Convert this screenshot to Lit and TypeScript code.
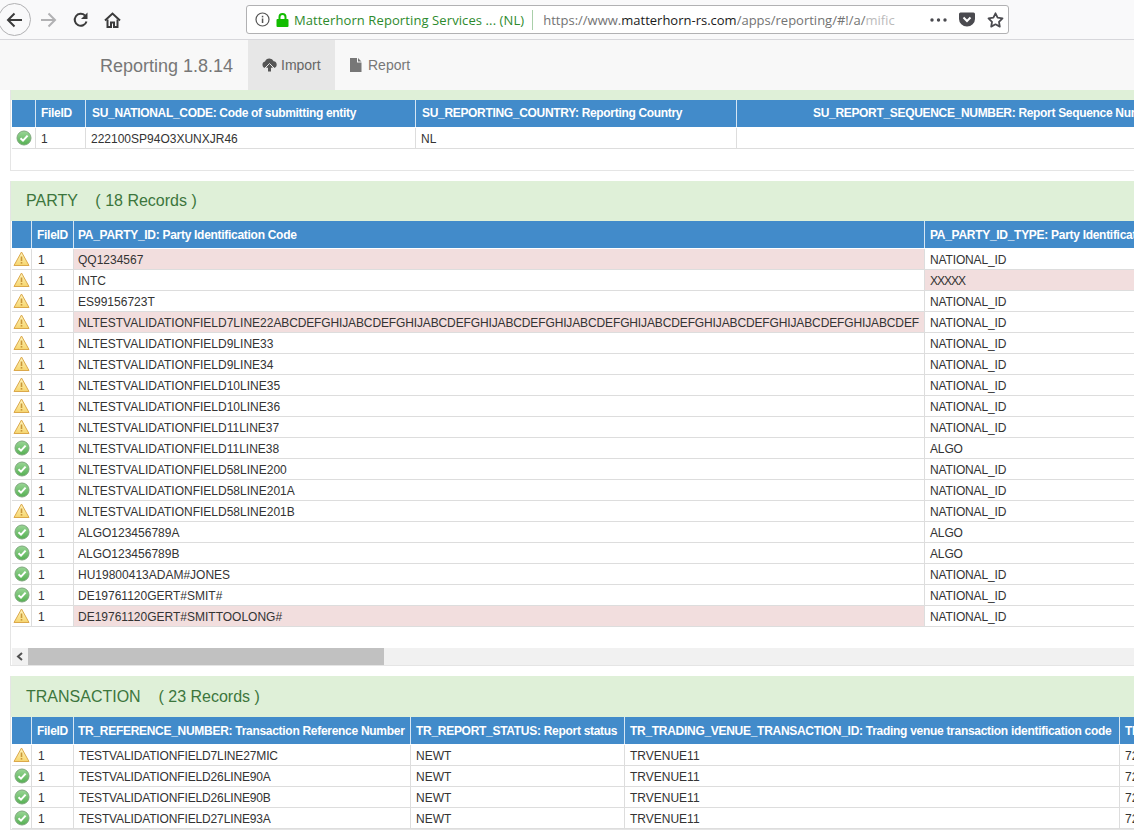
import { LitElement, html, css } from "lit";
import { customElement } from "lit/decorators.js";

const okIcon = html`<svg class="ic" width="16" height="16" viewBox="0 0 16 16"><defs><linearGradient id="g" x1="0" y1="0" x2="0" y2="1"><stop offset="0" stop-color="#9ad696"/><stop offset="1" stop-color="#55b052"/></linearGradient></defs><circle cx="8" cy="8" r="7" fill="url(#g)" stroke="#7fa87e" stroke-width="1"/><path d="M4.500 8.200 7 10.600 11.600 5.600" fill="none" stroke="#fff" stroke-width="2"/></svg>`;
const warnIcon = html`<svg class="ic" width="17" height="16" viewBox="0 0 17 16"><defs><linearGradient id="w" x1="0" y1="0" x2="0" y2="1"><stop offset="0" stop-color="#fff6c0"/><stop offset="1" stop-color="#f6d56e"/></linearGradient></defs><path d="M8.500 1 16 14.500H1Z" fill="url(#w)" stroke="#dba84a" stroke-width="1" stroke-linejoin="round"/><path d="M8.500 5.500V10" stroke="#c9973a" stroke-width="1.600"/><rect x="7.700" y="11" width="1.600" height="1.600" fill="#c9973a"/></svg>`;

const ABC = "ABCDEFGHIJ";
const longTail = html`NLTESTVALIDATIONFIELD7LINE22<span class="tail">${ABC.repeat(8) + "ABCDEF"}</span>`;
const partyRows: [number, unknown, string, number][] = [
  [0, "QQ1234567", "NATIONAL_ID", 1],
  [0, "INTC", "XXXXX", 2],
  [0, "ES99156723T", "NATIONAL_ID", 0],
  [0, longTail, "NATIONAL_ID", 1],
  [0, "NLTESTVALIDATIONFIELD9LINE33", "NATIONAL_ID", 0],
  [0, "NLTESTVALIDATIONFIELD9LINE34", "NATIONAL_ID", 0],
  [0, "NLTESTVALIDATIONFIELD10LINE35", "NATIONAL_ID", 0],
  [0, "NLTESTVALIDATIONFIELD10LINE36", "NATIONAL_ID", 0],
  [0, "NLTESTVALIDATIONFIELD11LINE37", "NATIONAL_ID", 0],
  [1, "NLTESTVALIDATIONFIELD11LINE38", "ALGO", 0],
  [1, "NLTESTVALIDATIONFIELD58LINE200", "NATIONAL_ID", 0],
  [1, "NLTESTVALIDATIONFIELD58LINE201A", "NATIONAL_ID", 0],
  [0, "NLTESTVALIDATIONFIELD58LINE201B", "NATIONAL_ID", 0],
  [1, "ALGO123456789A", "ALGO", 0],
  [1, "ALGO123456789B", "ALGO", 0],
  [1, "HU19800413ADAM#JONES", "NATIONAL_ID", 0],
  [1, "DE19761120GERT#SMIT#", "NATIONAL_ID", 0],
  [0, "DE19761120GERT#SMITTOOLONG#", "NATIONAL_ID", 1],
];

const txRows: [number, string][] = [
  [0, "TESTVALIDATIONFIELD7LINE27MIC"],
  [1, "TESTVALIDATIONFIELD26LINE90A"],
  [1, "TESTVALIDATIONFIELD26LINE90B"],
  [1, "TESTVALIDATIONFIELD27LINE93A"],
];

@customElement("app-root")
export class AppRoot extends LitElement {
  static styles = css`
    :host { display: block; width: 1134px; height: 833px; overflow: hidden; background: #fff; font-family: "Liberation Sans", Arial, sans-serif; font-size: 12px; color: #333; }
    .chrome { height: 39px; background: #f9f9fa; border-bottom: 1px solid #d7d7db; display: flex; align-items: center; }
    .back { width: 33px; height: 33px; margin-left: -2px; border: 1px solid #b1b1b3; border-radius: 50%; flex: none; display: flex; align-items: center; justify-content: flex-end; background: #f9f9fa; box-sizing: border-box; padding-right: 7px; }
    .nav-ic { flex: none; display: block; }
    .fwd { margin-left: 9px; }
    .reload { margin-left: 16px; }
    .home { margin-left: 15px; }
    .url { margin-left: 125px; width: 763px; height: 29px; flex: none; box-sizing: border-box; border: 1px solid #b1b1b3; border-radius: 3px; background: #fff; display: flex; align-items: center; font-family: "Open Sans", "Noto Sans", sans-serif; font-size: 13px; white-space: nowrap; padding-top: 1px; margin-top: -1px; }
    .url .i { margin-left: 8px; }
    .url .lock { margin-left: 6px; }
    .org { color: #2d8a2d; margin-left: 5px; letter-spacing: 0.1px; }
    .sep { width: 1px; height: 20px; background: #a9cfa9; margin: 0 10px 0 8px; flex: none; }
    .addr { color: #737373; width: 352px; overflow: hidden; flex: none; }
    .addr b { font-weight: 400; color: #1a1a1a; }
    .addr .fade { color: #bbb; }
    .dots { margin-left: 35px; }
    .pocket { margin-left: 12px; }
    .star { margin-left: 12px; }

    .appnav { height: 50px; background: #f8f8f8; display: flex; padding-left: 100px; box-sizing: border-box; }
    .brand { font-size: 18px; color: #777; line-height: 52px; width: 148px; flex: none; }
    .tab { font-size: 14px; color: #777; display: flex; align-items: center; padding: 0 14px; height: 50px; box-sizing: border-box; padding-bottom: 1px; }
    .tab.on { background: #e7e7e7; width: 87px; color: #666; gap: 4px; }
    .tab.rep { padding-left: 15px; gap: 6px; }

    .main { padding: 0 0 0 10px; }
    .panel { border: 1px solid #e5e5e5; border-right: 0; border-top: 0; margin-bottom: 10px; background: #fff; box-sizing: border-box; overflow: hidden; }
    .panel.first { height: 81px; }
    .panel.party { height: 485px; }
    .strip { height: 10px; background: #dff0d8; }
    .phead { height: 40px; background: #dff0d8; color: #3c763d; font-size: 16px; line-height: 39px; padding-left: 15px; box-sizing: border-box; white-space: pre; }
    .phead.t { height: 41px; line-height: 41px; }
    .tbl { margin-left: 1px; display: grid; width: max-content; }
    .tbl.top { grid-template-columns: 23px 50px 330px 321px 500px; }
    .tbl.pty { grid-template-columns: 19px 42px 851px 300px; }
    .tbl.trx { grid-template-columns: 19px 42px 337px 214px 495px 100px; }
    .hd { background: #428bca; color: #fff; font-weight: 700; height: 27px; line-height: 27px; border-left: 1px solid #d6e6f3; padding: 0 5px; box-sizing: border-box; white-space: nowrap; overflow: hidden; letter-spacing: -0.29px; }
    .hd:first-child { border-left: 0; }
    .pty .hd, .trx .hd { padding-top: 1px; }
    .top .hd { padding-left: 6px; letter-spacing: -0.32px; }
    .top .hd.fh { padding-left: 5px; }
    .top .hd.seq { padding-left: 76px; }
    .hd.narrow { padding-left: 4px; }
    .c { height: 21px; line-height: 21px; padding: 1px 5px 0 4px; border-bottom: 1px solid #ddd; border-left: 1px solid #ddd; box-sizing: border-box; white-space: nowrap; overflow: hidden; }
    .top .c { padding-left: 5px; }
    .trx .c, .pty .c.ty { padding-left: 5px; }
    .c.fid { padding-left: 6px; }
    .top .c.fid { padding-left: 5px; }
    .c.tight { letter-spacing: -0.14px; }
    .c.xx { letter-spacing: -1px; }
    .tail { letter-spacing: -0.13px; }
    .c.cell-ic { border-left: 0; padding: 0; display: flex; align-items: center; justify-content: center; }
    .c.bad { background: #f2dede; }
    .gap { height: 1px; grid-column: 1 / -1; background: #fff; }
    .scroll { height: 17px; margin-top: 21px; background: #f1f1f1; display: flex; align-items: stretch; margin-left: 1px; }
    .sbtn { width: 16px; display: flex; align-items: center; justify-content: center; flex: none; }
    .thumb { width: 356px; background: #c1c1c1; }
  `;

  render() {
    return html`
      <div class="chrome">
        <div class="back"><svg class="nav-ic" width="17" height="16" viewBox="0 0 17 16"><path d="M16 8H2M8.500 1.500 2 8l6.500 6.500" fill="none" stroke="#3b3b3b" stroke-width="2"/></svg></div>
        <svg class="nav-ic fwd" width="17" height="16" viewBox="0 0 17 16"><path d="M1 8h14M8.500 1.500 15 8l-6.500 6.500" fill="none" stroke="#b1b1b3" stroke-width="2"/></svg>
        <svg class="nav-ic reload" width="16" height="16" viewBox="0 0 16 16"><path d="M13.500 9.500A6 6 0 1 1 12 3.500" fill="none" stroke="#3b3b3b" stroke-width="2"/><path d="M14.500 0.500V7H8Z" fill="#3b3b3b"/></svg>
        <svg class="nav-ic home" width="17" height="16" viewBox="0 0 17 16"><path d="M1 8.500 8.500 1.500 16 8.500" fill="none" stroke="#3b3b3b" stroke-width="2"/><path d="M3.500 7.500V15h3.500v-4.500h3V15h3.500V7.500" fill="none" stroke="#3b3b3b" stroke-width="2"/></svg>
        <div class="url">
          <svg class="nav-ic i" width="15" height="15" viewBox="0 0 15 15"><circle cx="7.500" cy="7.500" r="6.500" fill="none" stroke="#555" stroke-width="1.200"/><rect x="6.800" y="6.500" width="1.500" height="4.500" fill="#555"/><rect x="6.800" y="3.800" width="1.500" height="1.600" fill="#555"/></svg>
          <svg class="nav-ic lock" width="13" height="14" viewBox="0 0 13 14"><path d="M3.500 6V4a3 3 0 0 1 6 0v2" fill="none" stroke="#12bc00" stroke-width="2"/><rect x="0.500" y="6" width="12" height="8" rx="1" fill="#12bc00"/></svg>
          <span class="org">Matterhorn Reporting Services ... (NL)</span>
          <span class="sep"></span>
          <span class="addr">https://www.<b>matterhorn-rs.com</b>/apps/reporting/#!/a/<span class="fade">mific</span></span>
          <svg class="nav-ic dots" width="17" height="4" viewBox="0 0 17 4"><circle cx="2" cy="2" r="1.700" fill="#4a4a4f"/><circle cx="8.500" cy="2" r="1.700" fill="#4a4a4f"/><circle cx="15" cy="2" r="1.700" fill="#4a4a4f"/></svg>
          <svg class="nav-ic pocket" width="16" height="15" viewBox="0 0 16 15"><path d="M1.500 0.500h13A1.500 1.500 0 0 1 16 2v5a8 7.500 0 0 1-16 0V2A1.500 1.500 0 0 1 1.500 0.500Z" fill="#4a4a4f"/><path d="M4.500 5.500 8 9l3.500-3.500" fill="none" stroke="#fff" stroke-width="2"/></svg>
          <svg class="nav-ic star" width="17" height="16" viewBox="0 0 17 16"><path d="M8.500 1.300 10.600 5.700l4.900 0.700-3.500 3.400 0.800 4.800-4.300-2.300-4.300 2.300 0.800-4.800L1.500 6.400l4.900-0.700Z" fill="none" stroke="#4a4a4f" stroke-width="1.800" stroke-linejoin="round"/></svg>
        </div>
      </div>
      <div class="appnav">
        <div class="brand">Reporting 1.8.14</div>
        <div class="tab on"><svg width="15" height="14" viewBox="0 0 15 14"><path d="M3.500 10A3.300 3.300 0 0 1 3 3.500 4.700 4.700 0 0 1 11.700 3.300 3.400 3.400 0 0 1 12 10Z" fill="#555"/><path d="M7.500 5.500 12 10H9.500v4h-4v-4H3Z" fill="#555" stroke="#e7e7e7" stroke-width="1"/></svg>Import</div>
        <div class="tab rep"><svg width="12" height="14" viewBox="0 0 12 14"><path d="M0 0h7v4.500h4.500V14H0Z M8 0l3.500 3.500H8Z" fill="#777"/></svg>Report</div>
      </div>
      <div class="main">
        <div class="panel first">
          <div class="strip"></div>
          <div class="tbl top">
            <div class="hd"></div><div class="hd fh">FileID</div><div class="hd">SU_NATIONAL_CODE: Code of submitting entity</div><div class="hd">SU_REPORTING_COUNTRY: Reporting Country</div><div class="hd seq">SU_REPORT_SEQUENCE_NUMBER: Report Sequence Number</div>
            <div class="gap"></div>
            <div class="c cell-ic">${okIcon}</div><div class="c fid">1</div><div class="c">222100SP94O3XUNXJR46</div><div class="c">NL</div><div class="c"></div>
          </div>
        </div>
        <div class="panel party">
          <div class="phead">PARTY    ( 18 Records )</div>
          <div class="tbl pty">
            <div class="hd"></div><div class="hd">FileID</div><div class="hd narrow">PA_PARTY_ID: Party Identification Code</div><div class="hd">PA_PARTY_ID_TYPE: Party Identification Code Type</div>
            <div class="gap"></div>
            ${partyRows.map(([ok, id, type, bad]) => html`
              <div class="c cell-ic">${ok ? okIcon : warnIcon}</div><div class="c fid">1</div><div class="c ${bad === 1 ? "bad" : ""}">${id}</div><div class="c ty ${bad === 2 ? "bad xx" : "tight"}">${type}</div>`)}
          </div>
          <div class="scroll"><div class="sbtn"><svg width="8" height="9" viewBox="0 0 8 9"><path d="M6 1 2 4.500 6 8" fill="none" stroke="#505050" stroke-width="2"/></svg></div><div class="thumb"></div></div>
        </div>
        <div class="panel">
          <div class="phead t">TRANSACTION    ( 23 Records )</div>
          <div class="tbl trx">
            <div class="hd"></div><div class="hd">FileID</div><div class="hd narrow">TR_REFERENCE_NUMBER: Transaction Reference Number</div><div class="hd">TR_REPORT_STATUS: Report status</div><div class="hd">TR_TRADING_VENUE_TRANSACTION_ID: Trading venue transaction identification code</div><div class="hd">TR_EXECUTING</div>
            <div class="gap"></div>
            ${txRows.map(([ok, id]) => html`
              <div class="c cell-ic">${ok ? okIcon : warnIcon}</div><div class="c fid">1</div><div class="c tight">${id}</div><div class="c">NEWT</div><div class="c">TRVENUE11</div><div class="c">72</div>`)}
          </div>
        </div>
      </div>`;
  }
}
